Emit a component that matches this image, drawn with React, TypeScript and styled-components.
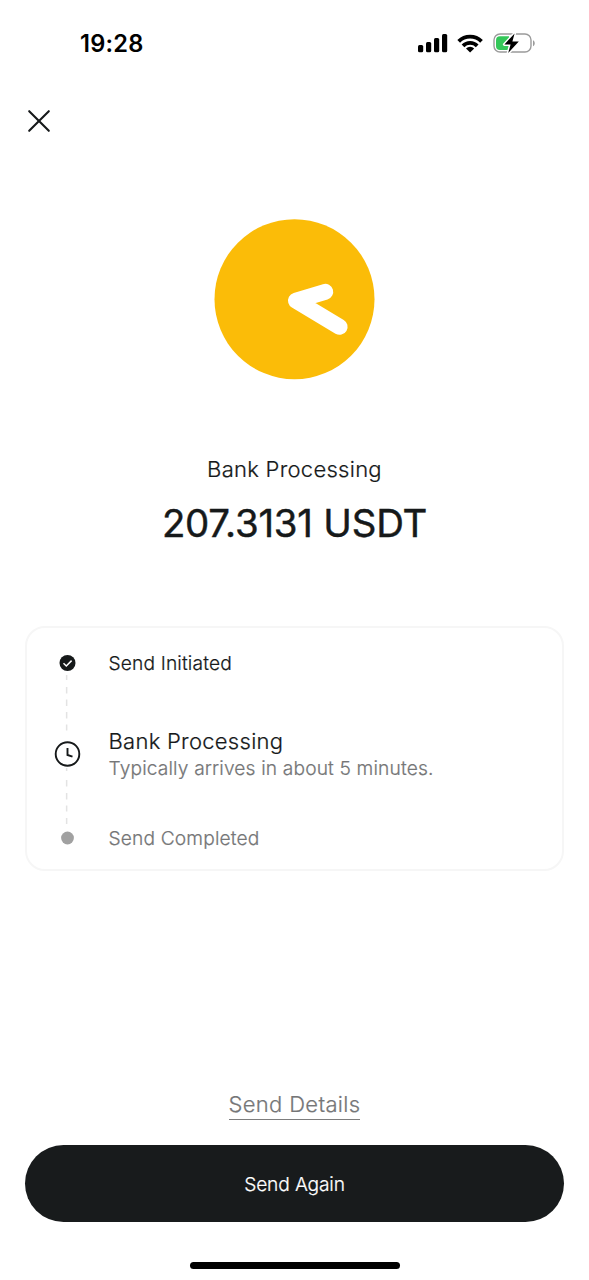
import React from "react";
import styled, { createGlobalStyle } from "styled-components";

const ink = "#16191a";
const muted = "#757677";

const GlobalStyle = createGlobalStyle`
  * { box-sizing: border-box; }
  body { margin: 0; background: #fff; }
`;

const Screen = styled.main`
  display: flex;
  flex-direction: column;
  width: 589px;
  height: 1280px;
  background: #fff;
  color: ${ink};
  font-family: Inter, "Liberation Sans", sans-serif;
  font-weight: 300;
  -webkit-text-stroke: 0.22px currentColor;
  overflow: hidden;
`;

const StatusBar = styled.header`
  display: flex;
  justify-content: space-between;
  align-items: center;
  height: 86px;
  padding: 0 54px 0 80px;
`;

const Time = styled.span`
  padding-top: 2px;
  font-size: 23.6px;
  font-weight: 600;
  line-height: 28px;
  letter-spacing: 0.25px;
  color: #000;
  -webkit-text-stroke: 0;
`;

const StatusIcons = styled.svg`
  display: block;
  width: 118px;
  height: 24px;
`;

const TopBar = styled.nav`
  display: flex;
  align-items: center;
  height: 70px;
  padding: 0 25px;
`;

const CloseButton = styled.button`
  display: grid;
  place-items: center;
  width: 28px;
  height: 28px;
  padding: 0;
  border: 0;
  background: none;
`;

const Summary = styled.section`
  display: flex;
  flex-direction: column;
  align-items: center;
  padding-top: 63px;
`;

const Emblem = styled.svg`
  display: block;
  width: 161px;
  height: 161px;
`;

const Status = styled.h1`
  margin: 73px 0 0;
  font-size: 22px;
  font-weight: inherit;
  line-height: 32px;
  letter-spacing: 0.28px;
`;

const Amount = styled.p`
  margin: 14px 0 0;
  font-size: 38.4px;
  font-weight: 400;
  line-height: 48px;
  letter-spacing: -0.2px;
  -webkit-text-stroke: 0.45px currentColor;
`;

const Card = styled.section`
  display: flex;
  height: 245px;
  margin: 79px 25px 0;
  padding: 27px 28px 0 26px;
  border: 2px solid #f6f6f6;
  border-radius: 20px;
`;

const Rail = styled.div`
  display: flex;
  flex-direction: column;
  width: 28px;
  margin-right: 27.5px;

  svg { display: block; flex: none; }
`;

const Steps = styled.ol`
  display: flex;
  flex-direction: column;
  margin: 0;
  padding: 0;
  list-style: none;
`;

const Step = styled.li<{ $gap?: number }>`
  margin-top: ${(p) => p.$gap ?? 0}px;
`;

const StepTitle = styled.div<{ $active?: boolean; $pending?: boolean }>`
  font-size: ${(p) => (p.$active ? 22 : 19.2)}px;
  line-height: ${(p) => (p.$active ? 32 : 28)}px;
  letter-spacing: ${(p) => (p.$active ? 0.28 : 0.15)}px;
  color: ${(p) => (p.$pending ? muted : ink)};
  margin-top: ${(p) => (p.$active ? 0 : -6)}px;
`;

const StepNote = styled.div`
  font-size: 19.2px;
  line-height: 22px;
  letter-spacing: 0.14px;
  color: ${muted};
`;

const Footer = styled.footer`
  display: flex;
  flex-direction: column;
  align-items: center;
  margin-top: auto;
  padding: 0 25px 11px;
`;

const DetailsLink = styled.a`
  border-bottom: 1px solid #7d7d7d;
  font-size: 22px;
  line-height: 30px;
  letter-spacing: 0.33px;
  color: ${muted};
`;

const PrimaryButton = styled.button`
  width: 539px;
  height: 77px;
  margin-top: 25px;
  padding: 0;
  border: 0;
  border-radius: 39px;
  background: #181b1c;
  color: #fff;
  font: inherit;
  font-size: 19.2px;
  letter-spacing: -0.15px;
`;

const HomeIndicator = styled.div`
  width: 210px;
  height: 7px;
  margin-top: 40px;
  border-radius: 4px;
  background: #000;
`;

function Connector({ height, dashes }: { height: number; dashes: [number, number][] }) {
  return (
    <svg width="28" height={height} viewBox={`0 0 28 ${height}`}>
      {dashes.map(([y, length]) => (
        <rect key={y} x="12.9" y={y} width="1.5" height={length} fill="#e3e3e3" />
      ))}
    </svg>
  );
}

export default function App() {
  return (
    <Screen>
      <GlobalStyle />
      <StatusBar>
        <Time>19:28</Time>
        <StatusIcons viewBox="417 31 118 24">
          <g fill="#000">
            <rect x="418" y="45" width="5.2" height="7.2" rx="1.5" />
            <rect x="426" y="42" width="5.2" height="10.2" rx="1.5" />
            <rect x="434" y="38" width="5.2" height="14.2" rx="1.5" />
            <rect x="442" y="34" width="5.2" height="18.2" rx="1.5" />
          </g>
          <g fill="none" stroke="#000" strokeWidth="3.8">
            <path d="M458.7 41.3a16.1 16.1 0 0 1 22.8 0" />
            <path d="M463 45.8a10 10 0 0 1 14.2 0" />
          </g>
          <path d="M470.1 52.6l-4.1-4.2a5.9 5.9 0 0 1 8.2 0z" fill="#000" />
          <rect x="494" y="34" width="37" height="18" rx="6" fill="none" stroke="#9b9b9b" strokeWidth="1.4" />
          <path d="M533 40.2c2.3.9 2.3 5.1 0 6z" fill="#9b9b9b" />
          <path d="M500 36.2h9v13.8h-9a4 4 0 0 1-4-4v-5.8a4 4 0 0 1 4-4z" fill="#34c759" />
          <path
            d="M514.6 33.4l-10.2 11h6.2l-2.4 8.6 10.6-11.4h-6.4z"
            fill="#000"
            stroke="#fff"
            strokeWidth="3"
            strokeLinejoin="round"
            paintOrder="stroke"
          />
        </StatusIcons>
      </StatusBar>

      <TopBar>
        <CloseButton aria-label="Close">
          <svg width="28" height="28" viewBox="0 0 28 28">
            <path d="M4.2 4.2l19.6 19.6M23.8 4.2L4.2 23.8" stroke={ink} strokeWidth="2.1" strokeLinecap="round" />
          </svg>
        </CloseButton>
      </TopBar>

      <Summary>
        <Emblem viewBox="214 219 161 161">
          <circle cx="294.5" cy="299.2" r="80" fill="#fbbc08" />
          <path d="M325.2 291.8L296 300.6L339.6 326.8" fill="none" stroke="#fff" strokeWidth="16" strokeLinecap="round" strokeLinejoin="round" />
        </Emblem>
        <Status>Bank Processing</Status>
        <Amount>207.3131 USDT</Amount>
      </Summary>

      <Card>
        <Rail>
          <svg width="28" height="16" viewBox="0 0 28 16">
            <circle cx="14.5" cy="8" r="8" fill={ink} />
            <path d="M10.5 8.3l2.8 2.7 5.3-5.4" fill="none" stroke="#fff" strokeWidth="1.5" />
          </svg>
          <Connector height={69} dashes={[[4, 5], [16, 6.5], [28.5, 6.5], [41, 6.5], [53.5, 6]]} />
          <svg width="28" height="28" viewBox="0 0 28 28">
            <circle cx="14.5" cy="14" r="11.8" fill="none" stroke={ink} strokeWidth="1.9" />
            <path d="M14.5 8v7l5 1.6" fill="none" stroke={ink} strokeWidth="1.9" />
          </svg>
          <Connector height={63} dashes={[[0, 3], [12, 6.5], [25, 6.5], [37.5, 6], [50, 6]]} />
          <svg width="28" height="14" viewBox="0 0 28 14">
            <circle cx="14.5" cy="7" r="6.4" fill="#a1a1a1" />
          </svg>
        </Rail>
        <Steps>
          <Step>
            <StepTitle>Send Initiated</StepTitle>
          </Step>
          <Step $gap={48}>
            <StepTitle $active>Bank Processing</StepTitle>
            <StepNote>Typically arrives in about 5 minutes.</StepNote>
          </Step>
          <Step $gap={51}>
            <StepTitle $pending>Send Completed</StepTitle>
          </Step>
        </Steps>
      </Card>

      <Footer>
        <DetailsLink>Send Details</DetailsLink>
        <PrimaryButton>Send Again</PrimaryButton>
        <HomeIndicator />
      </Footer>
    </Screen>
  );
}
